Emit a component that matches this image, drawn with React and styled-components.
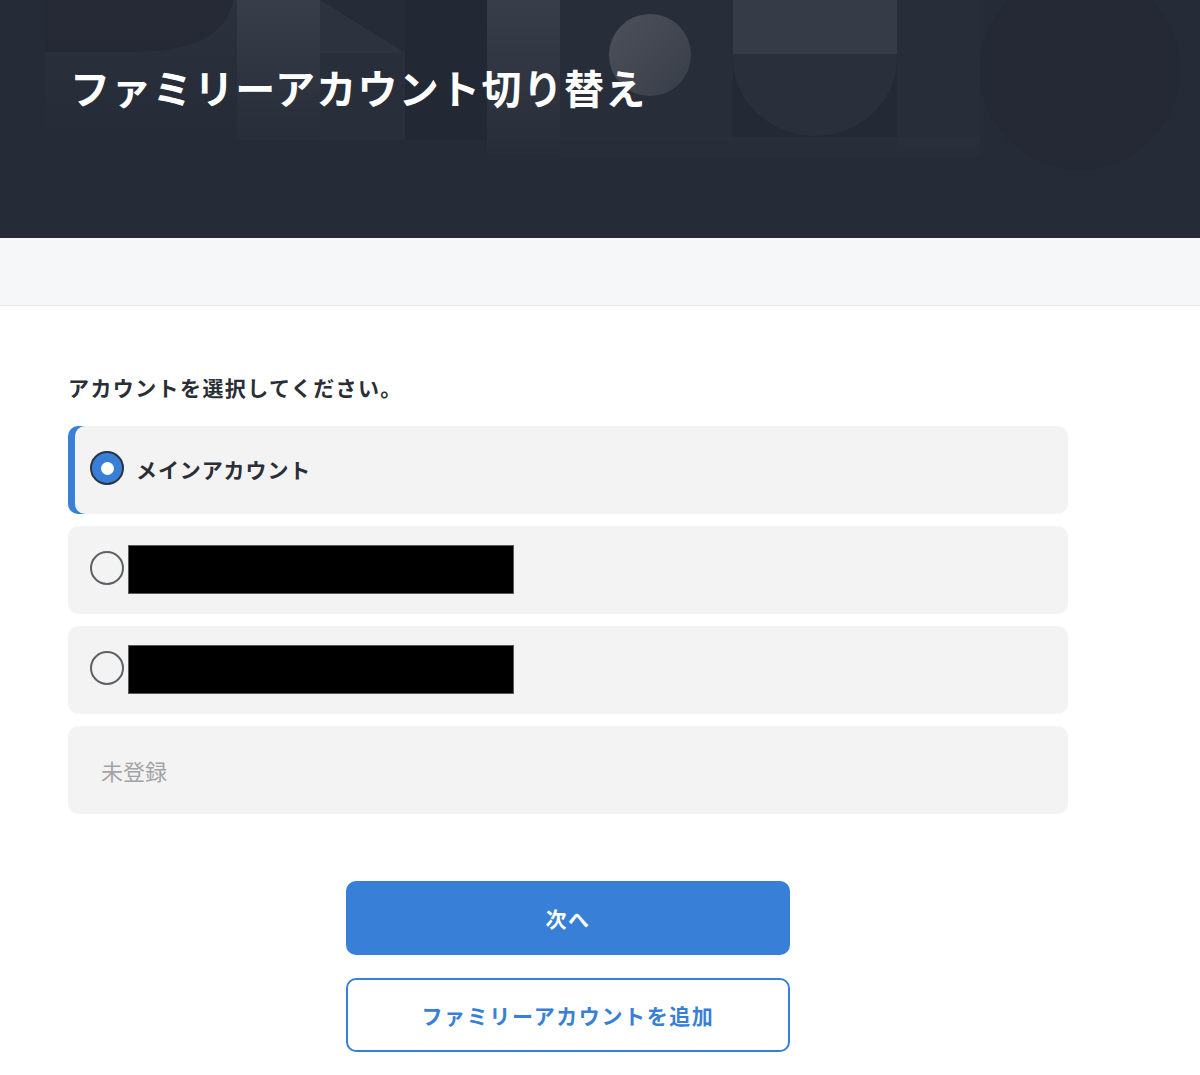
import React from "react";
import styled, { createGlobalStyle } from "styled-components";

const GlobalStyle = createGlobalStyle`
  * { box-sizing: border-box; }
  html, body { margin: 0; padding: 0; background: #ffffff; }
  body {
    font-family: "Noto Sans CJK JP", "Noto Sans", sans-serif;
    color: #2a2e35;
  }
`;

const Page = styled.div`
  width: 1200px;
  min-height: 1075px;
  background: #ffffff;
`;

const Header = styled.header`
  position: relative;
  height: 238px;
  background: #252b37;
  overflow: hidden;
  padding: 57px 0 0 70px;
`;

const Decor = styled.svg`
  position: absolute;
  left: 0;
  top: 0;
  width: 1200px;
  height: 238px;
`;

const Title = styled.h1`
  position: relative;
  margin: 0;
  font-size: 40px;
  line-height: 60px;
  font-weight: 700;
  letter-spacing: 1.3px;
  color: #ffffff;
`;

const Band = styled.div`
  height: 68px;
  background: #f6f7f9;
  border-bottom: 1px solid #e9eaed;
`;

const Main = styled.main`
  width: 1000px;
  margin-left: 68px;
  padding-top: 66px;
  display: flex;
  flex-direction: column;
`;

const Prompt = styled.p`
  margin: 0 0 24px;
  font-size: 21px;
  line-height: 30px;
  font-weight: 700;
  letter-spacing: 1.4px;
  color: #2a2e35;
`;

const List = styled.div`
  display: flex;
  flex-direction: column;
  gap: 12px;
`;

const Card = styled.div`
  height: 88px;
  border-radius: 10px;
  background: #f3f3f3;
  display: flex;
  align-items: center;
  padding-left: ${(p) => (p.$empty ? "33px" : "22px")};
  box-shadow: ${(p) => (p.$active ? "inset 7px 0 0 #3880d7" : "none")};
`;

const Radio = styled.span`
  width: 34px;
  height: 34px;
  flex: none;
  border-radius: 50%;
  border: 2px solid ${(p) => (p.$checked ? "#2b3340" : "#5c6168")};
  background: ${(p) => (p.$checked ? "#3880d7" : "transparent")};
  display: flex;
  align-items: center;
  justify-content: center;
  margin-top: -4px;

  &::after {
    content: "";
    display: ${(p) => (p.$checked ? "block" : "none")};
    width: 13px;
    height: 13px;
    border-radius: 50%;
    background: #ffffff;
  }
`;

const Name = styled.span`
  margin-left: 12px;
  margin-top: -3px;
  font-size: 21px;
  line-height: 30px;
  font-weight: 700;
  letter-spacing: 0.9px;
  color: #2a2e35;
`;

const Redacted = styled.span`
  margin-left: 4px;
  margin-top: -2px;
  width: 386px;
  height: 49px;
  background: #000000;
  border: 1px solid #5a5a5a;
`;

const Empty = styled.span`
  font-size: 22px;
  line-height: 30px;
  font-weight: 400;
  color: #a3a3a6;
`;

const Actions = styled.div`
  margin-top: 67px;
  display: flex;
  flex-direction: column;
  align-items: center;
  gap: 23px;
`;

const Button = styled.button`
  width: 444px;
  height: 74px;
  border-radius: 10px;
  font-family: inherit;
  font-size: 21px;
  font-weight: 700;
  letter-spacing: 1.6px;
  cursor: pointer;
  border: 2px solid #3880d7;
  background: ${(p) => (p.$outline ? "#ffffff" : "#3880d7")};
  color: ${(p) => (p.$outline ? "#3880d7" : "#ffffff")};
`;

function HeaderDecor() {
  return (
    <Decor viewBox="0 0 1200 238" aria-hidden="true">
      <defs>
        <linearGradient id="g1" x1="0" y1="0" x2="0" y2="1">
          <stop offset="0" stopColor="#ffffff" stopOpacity="0.09" />
          <stop offset="1" stopColor="#ffffff" stopOpacity="0.01" />
        </linearGradient>
        <linearGradient id="g2" x1="0" y1="0" x2="1" y2="1">
          <stop offset="0" stopColor="#ffffff" stopOpacity="0.17" />
          <stop offset="1" stopColor="#ffffff" stopOpacity="0.08" />
        </linearGradient>
        <linearGradient id="g3" x1="0" y1="0" x2="0" y2="1">
          <stop offset="0" stopColor="#ffffff" stopOpacity="0.03" />
          <stop offset="1" stopColor="#ffffff" stopOpacity="0" />
        </linearGradient>
      </defs>
      <rect x="45" y="0" width="192" height="140" fill="url(#g3)" />
      <path d="M45 0 H233 Q225 52 130 52 H45 Z" fill="#1f242e" fillOpacity="0.45" />
      <rect x="237" y="0" width="83" height="140" fill="url(#g1)" />
      <path d="M320 0 L405 53 L320 53 Z" fill="#ffffff" fillOpacity="0.04" />
      <rect x="320" y="53" width="85" height="87" fill="#ffffff" fillOpacity="0.018" />
      <rect x="405" y="0" width="82" height="140" fill="#1f242e" fillOpacity="0.3" />
      <rect x="487" y="0" width="73" height="155" fill="url(#g1)" />
      <rect x="560" y="0" width="173" height="140" fill="#ffffff" fillOpacity="0.012" />
      <circle cx="650" cy="55" r="41" fill="url(#g2)" />
      <rect x="733" y="0" width="164" height="137" fill="#1f242e" fillOpacity="0.2" />
      <rect x="733" y="0" width="164" height="54" fill="#ffffff" fillOpacity="0.09" />
      <path d="M733 54 H897 V58 A82 78 0 0 1 733 58 Z" fill="#ffffff" fillOpacity="0.03" />
      <rect x="897" y="0" width="83" height="145" fill="#ffffff" fillOpacity="0.012" />
      <circle cx="1080" cy="70" r="100" fill="#1f242e" fillOpacity="0.15" />
      <rect x="560" y="137" width="420" height="20" fill="#ffffff" fillOpacity="0.01" />
    </Decor>
  );
}

export default function App() {
  return (
    <>
      <GlobalStyle />
      <Page>
        <Header>
          <HeaderDecor />
          <Title>ファミリーアカウント切り替え</Title>
        </Header>
        <Band />
        <Main>
          <Prompt>アカウントを選択してください。</Prompt>
          <List>
            <Card $active>
              <Radio $checked />
              <Name>メインアカウント</Name>
            </Card>
            <Card>
              <Radio />
              <Redacted />
            </Card>
            <Card>
              <Radio />
              <Redacted />
            </Card>
            <Card $empty>
              <Empty>未登録</Empty>
            </Card>
          </List>
          <Actions>
            <Button>次へ</Button>
            <Button $outline>ファミリーアカウントを追加</Button>
          </Actions>
        </Main>
      </Page>
    </>
  );
}
